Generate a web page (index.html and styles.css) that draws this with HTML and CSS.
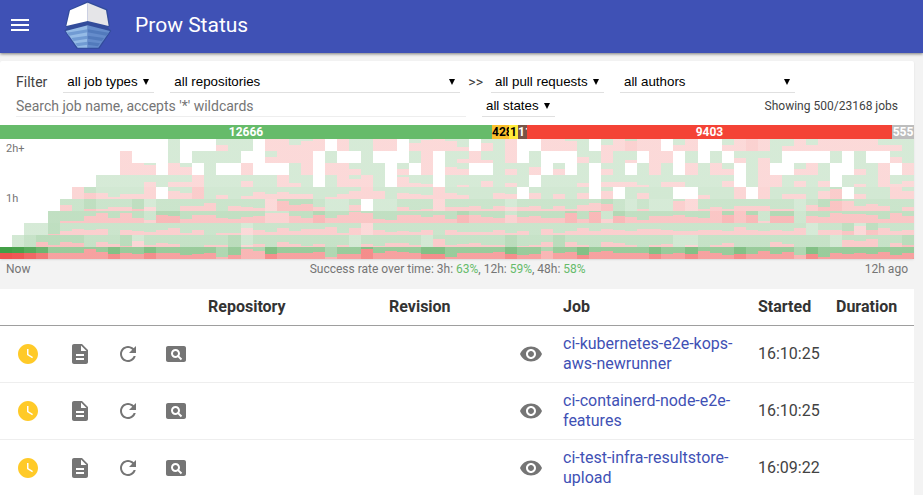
FILE: index.html
```html
<!DOCTYPE html>
<html lang="en">
<head>
<meta charset="utf-8">
<title>Prow Status</title>
<link rel="stylesheet" href="styles.css">
</head>
<body>
<svg class="sprite" aria-hidden="true">
  <symbol id="clock" viewBox="0 0 24 24"><path d="M12 2C6.500 2 2 6.500 2 12s4.500 10 10 10 10-4.500 10-10S17.500 2 12 2zm4.200 14.200L11 13V7h1.500v5.200l4.500 2.700-.8 1.300z"/></symbol>
  <symbol id="doc" viewBox="0 0 24 24"><path d="M14 2H6c-1.100 0-2 .9-2 2v16c0 1.100.9 2 2 2h12c1.100 0 2-.9 2-2V8l-6-6zm2 16H8v-2h8v2zm0-4H8v-2h8v2zm-3-5V3.500L18.500 9H13z"/></symbol>
  <symbol id="refresh" viewBox="0 0 24 24"><path d="M17.650 6.350C16.200 4.900 14.210 4 12 4c-4.420 0-7.990 3.580-7.990 8s3.570 8 7.990 8c3.730 0 6.840-2.550 7.730-6h-2.080c-.82 2.330-3.040 4-5.650 4-3.310 0-6-2.690-6-6s2.690-6 6-6c1.660 0 3.140.69 4.220 1.780L13 11h7V4l-2.350 2.350z"/></symbol>
  <symbol id="pageview" viewBox="0 0 24 24"><path d="M11.500 9C10.120 9 9 10.120 9 11.500s1.120 2.500 2.500 2.500 2.500-1.120 2.500-2.500S12.880 9 11.500 9zM20 4H4c-1.100 0-2 .9-2 2v12c0 1.100.9 2 2 2h16c1.100 0 2-.9 2-2V6c0-1.100-.9-2-2-2zm-3.210 14.210l-2.910-2.910c-.69.44-1.510.7-2.390.7C9.010 16 7 13.990 7 11.500S9.010 7 11.500 7 16 9.010 16 11.500c0 .88-.26 1.690-.7 2.390l2.910 2.900-1.420 1.420z"/></symbol>
  <symbol id="eye" viewBox="0 0 24 24"><path d="M12 4.500C7 4.500 2.730 7.610 1 12c1.730 4.390 6 7.500 11 7.500s9.270-3.110 11-7.500c-1.730-4.390-6-7.500-11-7.500zM12 17c-2.760 0-5-2.240-5-5s2.240-5 5-5 5 2.240 5 5-2.240 5-5 5zm0-8c-1.660 0-3 1.340-3 3s1.340 3 3 3 3-1.340 3-3-1.340-3-3-3z"/></symbol>
</svg>

<header class="topbar">
  <button class="menu" type="button" aria-label="Menu"><svg viewBox="0 0 24 24"><path d="M3 18h18v-2H3v2zm0-5h18v-2H3v2zm0-7v2h18V6H3z"/></svg></button>
  <svg class="logo" viewBox="0 0 144 150" aria-hidden="true">
    <path d="M14 30 70 4 130 28 138 78 132 83 142 92 106 146H38L1 92 10 83 4 78z" fill="#324c9b"/>
    <path d="M18 31 71 8V63L7 78z" fill="#fff"/>
    <path d="M71 8 126 31 134 78 71 63z" fill="#e5e5e8"/>
    <path d="M71 76V143H41L5 93z" fill="#95bbe6"/>
    <path d="M71 76 138 93 103 143H71z" fill="#658ccb"/>
    <path d="M8 98 71 88V97L15 107zM22 114 71 107V116L29 123zM34 130 71 125V134L40 139z" fill="#719bd3"/>
    <path d="M134 98 71 88V97L127 107zM120 114 71 107V116L113 123zM108 130 71 125V134L102 139z" fill="#527abc"/>
  </svg>
  <h1 class="title">Prow Status</h1>
</header>

<main class="content">
  <section class="card">
    <form class="filters">
      <div class="line">
        <span class="label">Filter</span>
        <span class="pick types"><select aria-label="Job type"><option>all job types</option></select></span>
        <span class="pick repos"><select aria-label="Repository"><option>all repositories</option></select></span>
        <span class="arrows">&gt;&gt;</span>
        <span class="pick pulls"><select aria-label="Pull request"><option>all pull requests</option></select></span>
        <span class="pick authors"><select aria-label="Author"><option>all authors</option></select></span>
      </div>
      <div class="line second">
        <input class="search" type="text" aria-label="Search job name" placeholder="Search job name, accepts '*' wildcards">
        <span class="pick states"><select aria-label="State"><option>all states</option></select></span>
        <span class="count">Showing 500/23168 jobs</span>
      </div>
    </form>
    <div class="bar">
      <span class="seg success">12666</span><span class="seg pending">428</span><span class="seg triggered">1</span><span class="seg aborted">115</span><span class="seg failure">9403</span><span class="seg error">555</span>
    </div>
    <div class="chart">
      <div class="cells" id="cells"></div>
      <span class="tick top">2h+</span>
      <span class="tick middle">1h</span>
    </div>
  </section>
  <div class="summary">
    <span>Now</span>
    <span class="rates">Success rate over time: 3h: <b>63%</b>, 12h: <b>59%</b>, 48h: <b>58%</b></span>
    <span class="past">12h ago</span>
  </div>

  <table class="builds">
    <colgroup><col class="c-state"><col class="c-icon"><col class="c-icon"><col class="c-icon"><col><col class="c-rev"><col class="c-icon"><col class="c-job"><col class="c-start"><col class="c-dur"></colgroup>
    <thead>
      <tr><th></th><th></th><th></th><th></th><th>Repository</th><th>Revision</th><th></th><th>Job</th><th>Started</th><th>Duration</th></tr>
    </thead>
    <tbody>
      <tr>
        <td class="ic"><svg class="icon wait"><use href="#clock"/></svg></td>
        <td class="ic"><a href="#log" aria-label="Log"><svg class="icon"><use href="#doc"/></svg></a></td>
        <td class="ic"><button type="button" aria-label="Rerun"><svg class="icon"><use href="#refresh"/></svg></button></td>
        <td class="ic"><a href="#job" aria-label="View job"><svg class="icon"><use href="#pageview"/></svg></a></td>
        <td></td><td></td>
        <td class="ic"><a href="#spy" aria-label="View results"><svg class="icon"><use href="#eye"/></svg></a></td>
        <td><a href="#kops">ci-kubernetes-e2e-kops-aws-newrunner</a></td><td>16:10:25</td><td></td>
      </tr>
      <tr>
        <td class="ic"><svg class="icon wait"><use href="#clock"/></svg></td>
        <td class="ic"><a href="#log" aria-label="Log"><svg class="icon"><use href="#doc"/></svg></a></td>
        <td class="ic"><button type="button" aria-label="Rerun"><svg class="icon"><use href="#refresh"/></svg></button></td>
        <td class="ic"><a href="#job" aria-label="View job"><svg class="icon"><use href="#pageview"/></svg></a></td>
        <td></td><td></td>
        <td class="ic"><a href="#spy" aria-label="View results"><svg class="icon"><use href="#eye"/></svg></a></td>
        <td><a href="#containerd">ci-containerd-node-e2e-features</a></td><td>16:10:25</td><td></td>
      </tr>
      <tr>
        <td class="ic"><svg class="icon wait"><use href="#clock"/></svg></td>
        <td class="ic"><a href="#log" aria-label="Log"><svg class="icon"><use href="#doc"/></svg></a></td>
        <td class="ic"><button type="button" aria-label="Rerun"><svg class="icon"><use href="#refresh"/></svg></button></td>
        <td class="ic"><a href="#job" aria-label="View job"><svg class="icon"><use href="#pageview"/></svg></a></td>
        <td></td><td></td>
        <td class="ic"><a href="#spy" aria-label="View results"><svg class="icon"><use href="#eye"/></svg></a></td>
        <td><a href="#resultstore">ci-test-infra-resultstore-upload</a></td><td>16:09:22</td><td></td>
      </tr>
    </tbody>
  </table>
</main>
<script src="chart.js"></script>
</body>
</html>
```
FILE: styles.css
```css
* { box-sizing: border-box; }
html, body { height: 100%; }
body {
  margin: 0;
  display: flex;
  flex-direction: column;
  overflow: hidden;
  background: #f3f3f3;
  color: #424242;
  font: 14px/20px Roboto, "Liberation Sans", sans-serif;
}
.sprite { display: none; }
button { padding: 0; border: 0; background: none; color: inherit; }

.topbar {
  flex: none;
  display: flex;
  align-items: center;
  height: 53px;
  padding: 0 8px 3px;
  background: #3f51b5;
  color: #fff;
  box-shadow: 0 1px 3px rgba(0, 0, 0, .5);
}
.menu { width: 24px; height: 24px; }
.menu svg { display: block; fill: #fff; }
.logo { width: 48px; height: 50px; margin-left: 32px; }
.title { margin: 0 0 0 23px; font-size: 21px; font-weight: 400; }

.content { flex: 1 0 auto; padding: 8px 9px 0 0; }
.card { background: #fff; border-radius: 2px; box-shadow: 0 1px 2px rgba(0, 0, 0, .1); }
.filters { padding: 9px 16px 7px; }
.line { display: flex; align-items: center; height: 24px; }
.pick { position: relative; height: 22px; border-bottom: 1px solid #e0e0e0; }
.pick::after {
  content: "";
  position: absolute;
  right: 5px;
  top: 8px;
  border: 3px solid transparent;
  border-top: 6px solid #000;
  border-bottom: 0;
  pointer-events: none;
}
.pick select {
  appearance: none;
  display: block;
  width: 100%;
  height: 21px;
  padding: 0 4px;
  border: 0;
  background: none;
  color: #000;
  font-family: "Liberation Sans", sans-serif;
}
.types { width: 91px; margin-left: 16px; }
.repos { flex: 1; margin-left: 16px; }
.arrows { margin: 0 8px; }
.pulls { width: 113px; }
.authors { width: 175px; margin: 0 103px 0 16px; }
.search {
  flex: 1;
  height: 22px;
  padding: 0;
  border: 0;
  border-bottom: 1px solid #eee;
  background: none;
  font: 14px Roboto, sans-serif;
}
.search::placeholder { color: #757575; }
.states { width: 73px; margin-left: 16px; }
.count { width: 343px; text-align: right; font-size: 12px; }

.bar { display: flex; height: 14px; font-size: 12px; font-weight: 700; line-height: 14px; text-align: center; color: #fff; }
.seg { overflow: hidden; min-width: 0; }
.success { flex: 492; background: #66bb6a; }
.pending { flex: 17; background: #fbc02d; color: #000; }
.triggered { flex: 9; background: #ffeb3b; color: #000; }
.aborted { flex: 9; background: #795548; }
.failure { flex: 365; background: #f44336; }
.error { flex: 22; background: #bdbdbd; }

.chart { position: relative; }
.cells { display: grid; grid-template-columns: repeat(76, 1fr); grid-auto-rows: 12px; }
.tick { position: absolute; left: 6px; color: #757575; font-size: 11px; line-height: 16px; }
.top { top: 2px; }
.middle { top: 52px; }
.summary { display: flex; justify-content: space-between; padding: 0 6px; color: #757575; font-size: 12px; }
.summary b { font-weight: 400; color: #66bb6a; }

.builds { width: 100%; margin-top: 10px; border-collapse: collapse; table-layout: fixed; background: #fff; font-size: 16px; }
.builds th { height: 36px; padding: 0 8px; border-bottom: 1px solid #9e9e9e; color: #333; text-align: left; font-weight: 700; }
.builds td { height: 57px; padding: 0 8px; border-bottom: 1px solid #eee; }
.builds a { color: #3f51b5; text-decoration: none; }
.builds .ic { padding: 0; text-align: center; }
.c-state { width: 56px; }
.c-icon { width: 48px; }
.c-rev { width: 126px; }
.c-job { width: 195px; }
.c-start { width: 78px; }
.c-dur { width: 86px; }
.icon { display: block; width: 24px; height: 24px; margin: 0 auto; fill: #757575; }
.ic button { display: block; margin: 0 auto; }
.icon.wait { fill: #ffca28; }
```
FILE: chart.js
```js
// Each character is one cell: "." is empty, otherwise a hex digit with the
// failed share in twelfths.
const rows = [
  { base: 0.22, cells: '..............0...600.cc6ac.c00cc.8bca4.80c..cca0.6cacc.6c..6ccc05c6ccccc660', dark: [52, 62], light: [] },
  { base: 0.22, cells: '..........c...0.0000..6ccc.0..0...0c.04c30c.0...60c03.cc.0.0.5050....0.0..60', dark: [], light: [] },
  { base: 0.22, cells: '..........cca.c8.0..c...0c.cc600.6.c.86..0608.6.0.60.0c0.c0c6.0c..6c0..60c.c', dark: [], light: [] },
  { base: 0.22, cells: '........00005055c000600c40.0c8c0.a43.0206040.0004.55520550006.0cc0606.030c36', dark: [], light: [] },
  { base: 0.24, cells: '......c66255c.86c0403757550258c80654c640065.60506.8.0600..400c.c05508a.500c8', dark: [7, 16, 69], light: [] },
  { base: 0.28, cells: '.....60224424005580543ca674006.00412c4452544525268700200ac24255522064aa57504', dark: [7, 11, 23, 24, 25, 50, 68, 69], light: [12, 22, 27, 28, 31, 32, 36, 42, 52, 54, 55, 57, 66] },
  { base: 0.33, cells: '....0227a5a53874885467aa75858ba4388684886586755a4b476377865c8c8277076a9984a7', dark: [13, 14, 26, 38, 47, 49, 51, 60, 62, 64, 65], light: [12, 22, 23, 42, 50, 63, 66] },
  { base: 0.28, cells: '..0014656054357250227537466827c534350533352406247465466544554854547055495745', dark: [4, 70, 72], light: [2, 3, 20, 30, 67, 71] },
  { base: 0.30, cells: '.005254053162430022023053130203144208234220125052054202302024000530000768042', dark: [3, 4, 5, 6, 10, 19, 42, 46, 75], light: [1, 11, 20, 29, 35, 56, 57, 69] },
  { base: 0.54, cells: '6666666a756566645624a856667255a687655266675458674786665565864558574526565746', dark: [9, 12, 22, 30, 35, 36, 42, 48, 54, 57, 61, 67], light: [18, 20, 21, 27, 45, 66] },
];
const newest = [1, 0.97, 0.88, 0.78];
const box = document.getElementById('cells');
rows.forEach((row, r) => {
  [...row.cells].forEach((ch, c) => {
    const cell = document.createElement('div');
    if (ch !== '.') {
      const step = row.base * 0.22;
      let a = row.base;
      if (row.dark.includes(c)) a += step;
      if (row.light.includes(c)) a -= step;
      if (r === 9 && c < 4) a = newest[c];
      const green = 12 - parseInt(ch, 16);
      cell.style.background = `linear-gradient(rgba(67,160,71,${a}) ${green}px, rgba(239,83,80,${a}) ${green}px)`;
    }
    box.append(cell);
  });
});
```
